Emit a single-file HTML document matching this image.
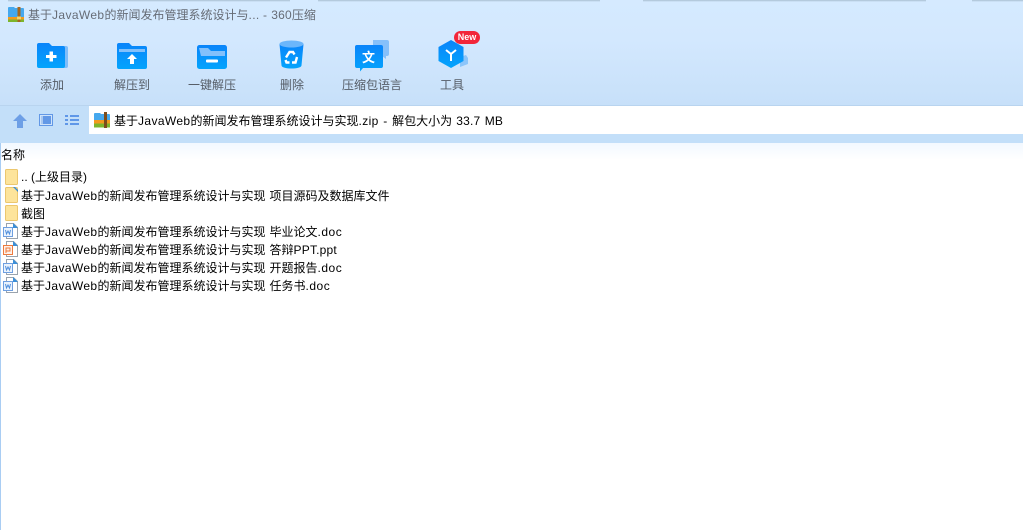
<!DOCTYPE html>
<html><head><meta charset="utf-8">
<style>
html,body{margin:0;padding:0;background:#fff}
#r{position:relative;width:1023px;height:530px;overflow:hidden;background:#fff;font:12px/18px "Liberation Sans","Noto Sans CJK SC",sans-serif;color:#000}
.a{position:absolute;white-space:nowrap}
.lb{color:#555c66;text-align:center;width:90px;top:76px}
.row{left:21px;word-spacing:.7px}
.l{letter-spacing:.38px}
svg{position:absolute;overflow:visible}
</style></head><body><div id="r">
<div class="a" style="left:0;top:0;width:1023px;height:105px;background:linear-gradient(#d5eaff 0,#d3e8fe 40px,#c7e0f9 105px)"></div>
<div class="a" style="left:0;top:105px;width:1023px;height:1px;background:#b9d4ef"></div>
<div class="a" style="left:8px;top:0;width:1015px;height:2px;background:linear-gradient(#a9bfd2,#d5eaff)"></div>
<div class="a" style="left:290px;top:0;width:28px;height:2px;background:#d5eaff"></div>
<div class="a" style="left:600px;top:0;width:43px;height:2px;background:#d5eaff"></div>
<div class="a" style="left:926px;top:0;width:46px;height:2px;background:#d5eaff"></div>
<div class="a" style="left:0;top:106px;width:1023px;height:37px;background:#c3dff9"></div>
<div class="a" style="left:0;top:143px;width:1023px;height:17px;background:linear-gradient(#f2f8ff,#fff)"></div>
<div class="a" style="left:89px;top:106px;width:934px;height:28px;background:#fff"></div>
<div class="a" style="left:0;top:143px;width:1px;height:387px;background:#a9cdf3"></div>

<svg style="left:8px;top:7px" width="16" height="15" viewBox="0 0 16 15"><path d="M0 1a1 1 0 0 1 1-1h5l1 1h8a1 1 0 0 1 1 1v9H0z" fill="#45a8ee"/><rect y="10" width="16" height="2.500" fill="#f29a1e"/><rect y="12.500" width="16" height="2.500" fill="#7db52c"/><rect x="9.500" y="0" width="3" height="15" fill="#a8671c"/><rect x="9" y="9.500" width="4" height="3" fill="#f5d56a"/></svg>
<div class="a" style="left:28px;top:6px;color:#666c76"><span style="word-spacing:1px">基于<span class="l">JavaWeb</span>的新闻发布管理系统设计与<span class="l">...</span></span> <span style="letter-spacing:.2px;word-spacing:.5px">- 360</span>压缩</div>

<svg style="left:37px;top:43px" width="32" height="26" viewBox="0 0 32 26"><defs><linearGradient id="g" x1="0" y1="0" x2="0" y2="1"><stop offset="0" stop-color="#0a84fa"/><stop offset="1" stop-color="#04a4fc"/></linearGradient></defs><path d="M26 3h3a2 2 0 0 1 2 2v18a2 2 0 0 1-2 2h-3z" fill="#7fbdf9"/><path d="M2 0h10l3 3h11a2 2 0 0 1 2 2v18a2 2 0 0 1-2 2H2a2 2 0 0 1-2-2V2a2 2 0 0 1 2-2z" fill="url(#g)"/><path d="M9 12h3.500V8.500h3.500V12h3.500v3H16v3.500h-3.500V15H9z" fill="#fff"/></svg>
<div class="a lb" style="left:7px">添加</div>

<svg style="left:117px;top:43px" width="30" height="26" viewBox="0 0 30 26"><path d="M2 0h10l3 3h13a2 2 0 0 1 2 2v19a2 2 0 0 1-2 2H2a2 2 0 0 1-2-2V2a2 2 0 0 1 2-2z" fill="url(#g)"/><path d="M2 6h26v3H2z" fill="#82c0fb"/><path d="M15 11l5 5h-3v5h-4v-5h-3z" fill="#fff"/></svg>
<div class="a lb" style="left:87px">解压到</div>

<svg style="left:197px;top:45px" width="30" height="24" viewBox="0 0 30 24"><rect width="30" height="24" rx="2.500" fill="url(#g)"/><path d="M2 3h9l3 3h14v5H4z" fill="#82c0fb"/><rect x="9" y="14.500" width="12" height="3" rx="1" fill="#fff"/></svg>
<div class="a lb" style="left:167px">一键解压</div>

<svg style="left:279px;top:40px" width="25" height="29" viewBox="0 0 25 29"><path d="M.5 4l2 21.500c.5 4 19.500 4 20 0l2-21.500z" fill="url(#g)"/><ellipse cx="12.500" cy="4" rx="12" ry="3.500" fill="#6bb6fb"/><path d="M7 17.500l3.500-5.500h3.500l1.500 2.500M18 17l-1.500 5.500h-3.500M10.500 22.500H7.500L6.500 20" fill="none" stroke="#fff" stroke-width="2.400"/></svg>
<div class="a lb" style="left:247px">删除</div>

<svg style="left:355px;top:40px" width="35" height="33" viewBox="0 0 35 33"><path d="M18 0h14a2 2 0 0 1 2 2v12a2 2 0 0 1-2 2h-1v-1 4l-4-3V5H18z" fill="#86c0fa"/><path d="M2 5h24a2 2 0 0 1 2 2v19a2 2 0 0 1-2 2H8l-3 3.500V28H2a2 2 0 0 1-2-2V7a2 2 0 0 1 2-2z" fill="url(#g)"/><text x="13.500" y="22" text-anchor="middle" font-size="13" font-weight="700" fill="#fff" font-family="Noto Sans CJK SC">文</text></svg>
<div class="a lb" style="left:327px">压缩包语言</div>

<svg style="left:438px;top:40px" width="30" height="29" viewBox="0 0 30 29"><path d="M22 17l6-2 2 3v6l-8 3z" fill="#8cc5fa"/><path d="M13 0l12.500 7v14L13 28 .500 21V7z" fill="url(#g)"/><path d="M8 10l5 4 5-4M13 14v7" fill="none" stroke="#fff" stroke-width="2"/></svg>
<div class="a" style="left:454px;top:31px;width:26px;height:13px;border-radius:7px;background:#f2263a;color:#fff;font:700 9px/13px 'Liberation Sans',sans-serif;text-align:center">New</div>
<div class="a lb" style="left:407px">工具</div>

<svg style="left:13px;top:114px" width="14" height="14" viewBox="0 0 14 14"><path d="M7 0l7 7h-4v7H4V7H0z" fill="#6d9fe6"/></svg>
<svg style="left:39px;top:114px" width="14" height="12" viewBox="0 0 14 12"><rect x=".5" y=".5" width="13" height="11" fill="#cfe3fa" stroke="#6298e6"/><rect x="2" y="2" width="10" height="8" fill="#6298e6"/><rect x="2" y="2" width="2" height="8" fill="#a9c8f0"/></svg>
<svg style="left:65px;top:114px" width="14" height="12" viewBox="0 0 14 12"><path d="M0 1h3v2H0zM5 1h9v2H5zM0 5h3v2H0zM5 5h9v2H5zM0 9h3v2H0zM5 9h9v2H5z" fill="#5f97e8"/></svg>

<svg style="left:94px;top:112px" width="16" height="16" viewBox="0 0 16 16"><path d="M0 2a1 1 0 0 1 1-1h5l1 1h8a1 1 0 0 1 1 1v6H0z" fill="#45a8ee"/><rect y="8" width="16" height="3.500" fill="#f29a1e"/><rect y="11.500" width="16" height="4" fill="#7db52c"/><rect x="10" y="0" width="3" height="16" fill="#7d4d1c"/></svg>
<div class="a" style="left:114px;top:112px;word-spacing:.8px">基于<span class="l">JavaWeb</span>的新闻发布管理系统设计与实现<span class="l">.zip - </span>解包大小为 <span style="letter-spacing:.2px">33.7 MB</span></div>

<div class="a" style="left:1px;top:146px">名称</div>

<svg style="left:5px;top:169px" width="13" height="52" viewBox="0 0 13 52"><defs><rect id="f" x=".5" y=".5" width="12" height="15" rx="1" fill="#fde49b" stroke="#ecc76e"/></defs><use href="#f"/><use href="#f" y="18"/><use href="#f" y="36"/><path d="M8 18h2l3 3v2z" fill="#3b8fd8"/></svg>
<div class="a" style="left:21px;top:168px">.. (上级目录)</div>
<div class="a row" style="top:187px">基于<span class="l">JavaWeb</span>的新闻发布管理系统设计与实现 项目源码及数据库文件</div>
<div class="a row" style="top:205px">截图</div>

<svg style="left:3px;top:223px" width="15" height="70" viewBox="0 0 15 70"><defs><g id="d"><path d="M3.500.5h7l4 4v11h-11z" fill="#fff" stroke="#9aa3ad"/><path d="M10 0l5 5h-5z" fill="#3b8fd8"/><rect x=".5" y="4.500" width="9" height="9" fill="#eaf3fd" stroke="#6f9fe0"/><path d="M2.500 7l1 4 1.500-3 1.500 3 1-4" fill="none" stroke="#4f8edc"/></g></defs><use href="#d"/><use href="#d" y="36"/><use href="#d" y="54"/><g transform="translate(0 18)"><path d="M3.500.5h7l4 4v11h-11z" fill="#fff" stroke="#9aa3ad"/><path d="M10 0l5 5h-5z" fill="#3b8fd8"/><rect x=".5" y="4.500" width="9" height="9" fill="#fdf1ea" stroke="#ee7a3d"/><path d="M3 12V7h4v3H3" fill="none" stroke="#ee7a3d"/></g></svg>
<div class="a row" style="top:223px">基于<span class="l">JavaWeb</span>的新闻发布管理系统设计与实现 毕业论文<span class="l" style="letter-spacing:.5px">.doc</span></div>
<div class="a row" style="top:241px">基于<span class="l">JavaWeb</span>的新闻发布管理系统设计与实现 答辩<span class="l" style="letter-spacing:.2px">PPT.ppt</span></div>
<div class="a row" style="top:259px">基于<span class="l">JavaWeb</span>的新闻发布管理系统设计与实现 开题报告<span class="l" style="letter-spacing:.5px">.doc</span></div>
<div class="a row" style="top:277px">基于<span class="l">JavaWeb</span>的新闻发布管理系统设计与实现 任务书<span class="l" style="letter-spacing:.5px">.doc</span></div>
</div></body></html>
